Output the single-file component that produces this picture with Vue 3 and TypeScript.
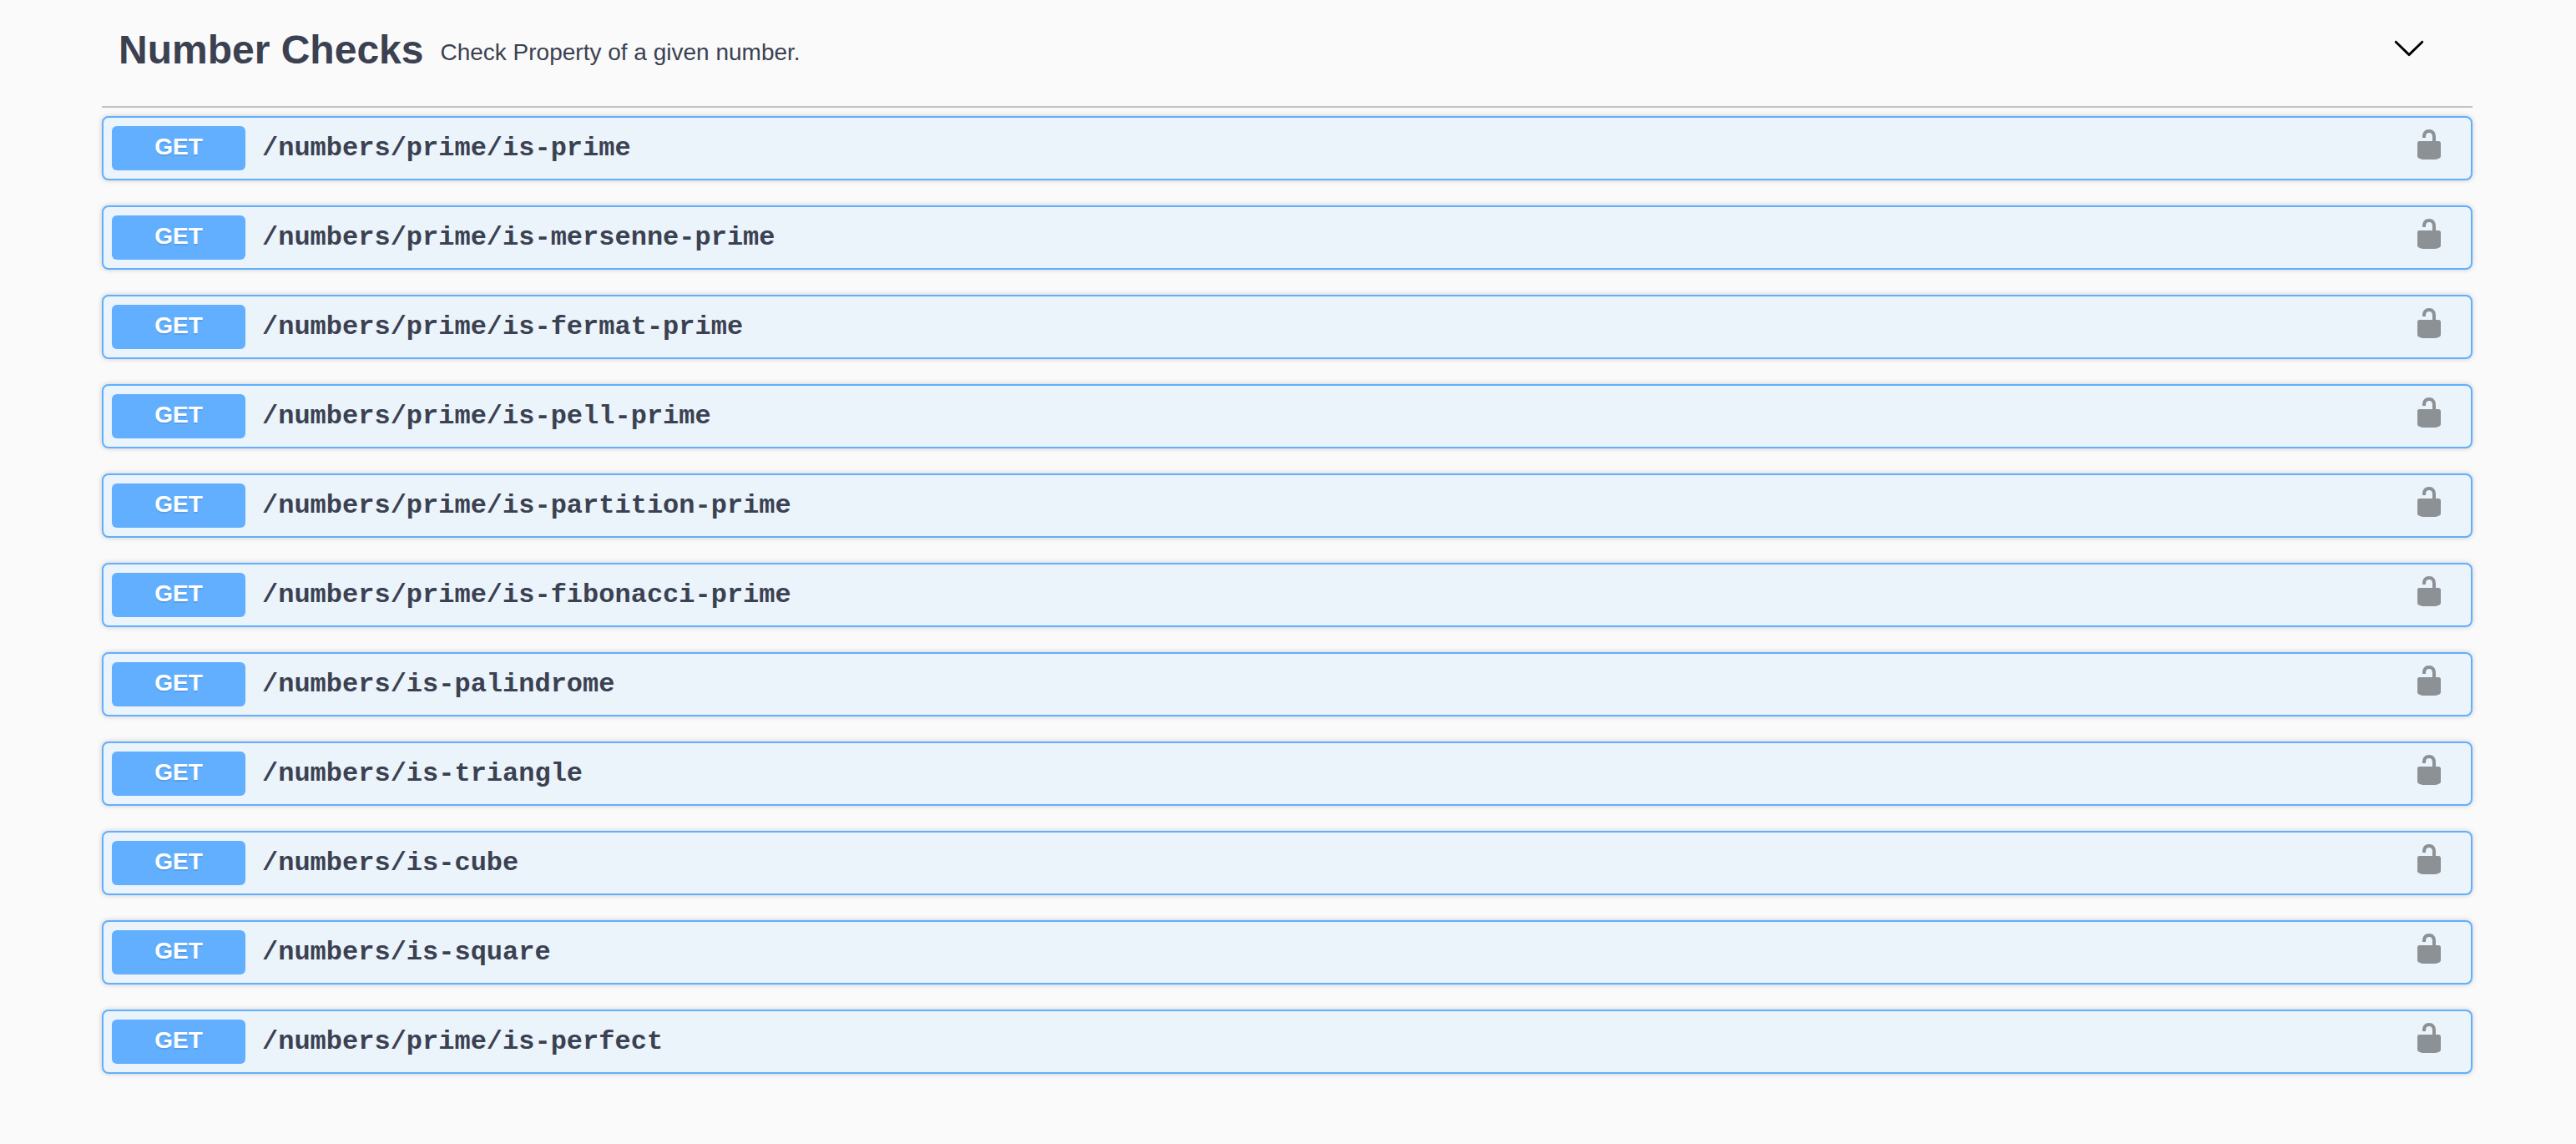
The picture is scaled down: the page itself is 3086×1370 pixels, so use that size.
<script setup lang="ts">
import { ref } from 'vue'

interface Operation {
  method: string
  path: string
}

const expanded = ref<boolean>(true)

const operations: Operation[] = [
  '/numbers/prime/is-prime',
  '/numbers/prime/is-mersenne-prime',
  '/numbers/prime/is-fermat-prime',
  '/numbers/prime/is-pell-prime',
  '/numbers/prime/is-partition-prime',
  '/numbers/prime/is-fibonacci-prime',
  '/numbers/is-palindrome',
  '/numbers/is-triangle',
  '/numbers/is-cube',
  '/numbers/is-square',
  '/numbers/prime/is-perfect',
].map((path) => ({ method: 'GET', path }))
</script>

<template>
  <main class="page">
    <section class="tag">
      <header class="tag-header">
        <h3 class="tag-name">Number Checks</h3>
        <p class="tag-description">Check Property of a given number.</p>
        <button
          class="toggle"
          type="button"
          aria-label="Toggle section"
          :aria-expanded="expanded"
          @click="expanded = !expanded"
        >
          <svg class="icon" viewBox="0 0 20 20" aria-hidden="true">
            <path
              d="M17.418 6.109c.272-.268.709-.268.979 0s.271.701 0 .969l-7.908 7.83c-.27.268-.707.268-.979 0l-7.908-7.83c-.27-.268-.27-.701 0-.969.271-.268.709-.268.979 0L10 13.25l7.418-7.141z"
            />
          </svg>
        </button>
      </header>

      <ul v-if="expanded" class="operations">
        <li v-for="op in operations" :key="op.path" class="operation">
          <button class="summary" type="button">
            <span class="method">{{ op.method }}</span>
            <span class="path">{{ op.path }}</span>
          </button>
          <button class="lock" type="button" :aria-label="`Authorize ${op.path}`">
            <svg class="icon" viewBox="0 0 20 20" aria-hidden="true">
              <path
                d="M15.8 8H14V5.6C14 2.703 12.665 1 10 1 7.334 1 6 2.703 6 5.6V6h2v-.801C8 3.754 8.797 3 10 3c1.203 0 2 .754 2 2.199V8H4c-.553 0-1 .646-1 1.199V17c0 .549.428 1.139.951 1.307l1.197.387C5.672 18.861 6.55 19 7.1 19h5.8c.549 0 1.428-.139 1.951-.307l1.196-.387c.524-.167.953-.757.953-1.306V9.199C17 8.646 16.352 8 15.8 8z"
              />
            </svg>
          </button>
        </li>
      </ul>
    </section>
  </main>
</template>

<style>
body {
  margin: 0;
  background: #fafafa;
}
</style>

<style scoped>
.page {
  box-sizing: border-box;
  padding: 0 124px 84px 122px;
  color: #3b4151;
  font-family: 'Liberation Sans', Arial, sans-serif;
}

button {
  margin: 0;
  padding: 0;
  border: 0;
  background: none;
  color: inherit;
  font: inherit;
  cursor: pointer;
}

.icon {
  display: block;
  width: 40px;
  height: 40px;
}

.tag-header {
  display: flex;
  align-items: center;
  gap: 20px;
  padding: 32px 56px 39px 20px;
  border-bottom: 2px solid rgba(59, 65, 81, 0.3);
}

.tag-name {
  margin: 0;
  font-size: 48px;
  line-height: 56px;
  font-weight: 700;
}

.tag-description {
  flex: 1;
  margin: 0;
  padding-top: 6px;
  font-size: 28px;
  line-height: 32px;
}

.toggle {
  padding-bottom: 6px;
}

.toggle .icon {
  fill: #000;
}

.operations {
  display: flex;
  flex-direction: column;
  gap: 30px;
  margin: 0;
  padding: 10px 0 0;
  list-style: none;
}

.operation {
  display: flex;
  align-items: center;
  padding: 10px;
  border: 2px solid #61affe;
  border-radius: 8px;
  background: #ebf3fb;
  box-shadow: 0 0 6px rgba(0, 0, 0, 0.19);
}

.summary {
  display: flex;
  flex: 1;
  align-items: center;
  gap: 20px;
  text-align: left;
}

.method {
  box-sizing: border-box;
  width: 160px;
  padding: 9px 0 12px;
  border-radius: 6px;
  background: #61affe;
  color: #fff;
  font-size: 28px;
  line-height: 32px;
  font-weight: 700;
  text-align: center;
  text-shadow: 0 2px 0 rgba(0, 0, 0, 0.1);
}

.path {
  font-family: 'Liberation Mono', 'Courier New', monospace;
  font-size: 32px;
  line-height: 36px;
  font-weight: 700;
}

.lock {
  padding: 0 20px 9px;
}

.lock .icon {
  fill: #000;
  opacity: 0.4;
}
</style>
